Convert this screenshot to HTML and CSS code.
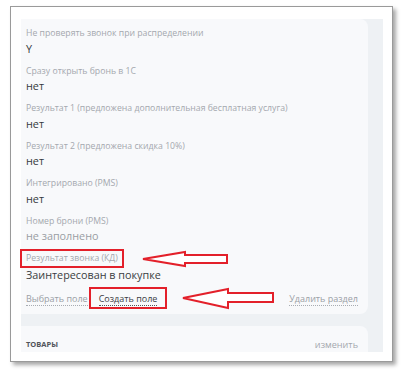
FILE: index.html
```html
<!DOCTYPE html>
<html lang="ru">
<head>
    <meta charset="UTF-8">
    <title>Поля сделки</title>
    <link rel="stylesheet" href="styles.css">
</head>
<body>

    <div class="shot">
        <div class="panel">
            <div class="card">
                <div class="field">
                    <div class="label">Не проверять звонок при распределении</div>
                    <div class="value">Y</div>
                </div>
                <div class="field">
                    <div class="label">Сразу открыть бронь в 1С</div>
                    <div class="value">нет</div>
                </div>
                <div class="field">
                    <div class="label">Результат 1 (предложена дополнительная бесплатная услуга)</div>
                    <div class="value">нет</div>
                </div>
                <div class="field">
                    <div class="label">Результат 2 (предложена скидка 10%)</div>
                    <div class="value">нет</div>
                </div>
                <div class="field">
                    <div class="label">Интегрировано (PMS)</div>
                    <div class="value">нет</div>
                </div>
                <div class="field">
                    <div class="label">Номер брони (PMS)</div>
                    <div class="value empty">не заполнено</div>
                </div>
                <div class="field">
                    <div class="label">Результат звонка (КД)</div>
                    <div class="value big">Заинтересован в покупке</div>
                </div>

                <div class="actions">
                    <a href="#">Выбрать поле</a>
                    <a href="#" class="dark">Создать поле</a>
                    <a href="#" class="right">Удалить раздел</a>
                </div>
            </div>

            <div class="card goods">
                <span class="goods-title">Товары</span>
                <a href="#" class="edit">изменить</a>
            </div>
        </div>
    </div>

    <!-- пометки поверх скриншота -->
    <svg class="marks" width="404" height="375" viewBox="0 0 404 375">
        <rect x="21" y="250" width="102" height="17" fill="none" stroke="#e3202a" stroke-width="2"/>
        <rect x="90" y="288" width="76" height="20" fill="none" stroke="#e3202a" stroke-width="2"/>
        <polygon points="143,259 185,252 185,255 227,255 227,263 185,263 185,266" fill="#fff" stroke="#e3202a" stroke-width="2" stroke-linejoin="miter"/>
        <polygon points="183,298 228,289 228,293 273,293 273,302 228,302 228,308" fill="#fff" stroke="#e3202a" stroke-width="2" stroke-linejoin="miter"/>
    </svg>

</body>
</html>
```

FILE: styles.css
```css
body {
    margin: 0;
    padding: 6px 0 0 10px;
    font-family: 'Open Sans', 'Liberation Sans', sans-serif;
    background-color: #fff;
    width: 404px;
    height: 375px;
    box-sizing: border-box;
    position: relative;
    overflow: hidden;
}

/* рамка скриншота */
.shot {
    width: 383px;
    box-sizing: border-box;
    border: 1px solid #9a9a9a;
    padding: 12px 9px 9px 10px;
    background-color: #fff;
    box-shadow: 3px 3px 4px rgba(0, 0, 0, 0.35);
}

.panel {
    background-color: #eef1f4;
    height: 333px;
    padding-right: 15px;
    overflow: hidden;
}

.card {
    background-color: #f8f9fb;
    border-radius: 0 8px 8px 0;
    padding: 8px 10px 8px 5px;
}

.field {
    margin-bottom: 8px;
}

.label {
    font-size: 8.7px;
    line-height: 13.5px;
    color: #a4a8ae;
}

.value {
    font-size: 10.8px;
    line-height: 16px;
    color: #36393e;
}

.value.empty {
    color: #9a9ea4;
}

.value.big {
    font-size: 10.8px;
    line-height: 18px;
    color: #3a3d42;
}

.field:last-of-type {
    margin-bottom: 0;
}

.actions {
    display: flex;
    gap: 11px;
    margin-top: 7px;
    line-height: 16px;
}

.actions a {
    font-size: 9px;
    color: #9ba0a6;
    text-decoration: none;
    border-bottom: 1px dotted #a8acb2;
    line-height: 13px;
}

.actions a.dark {
    color: #3c4046;
    border-bottom-color: #555;
}

.actions a.right {
    margin-left: auto;
}

.goods {
    margin-top: 12px;
    border-radius: 0 8px 0 0;
    display: flex;
    justify-content: space-between;
    align-items: center;
    padding-top: 12px;
}

.goods-title {
    font-size: 7.5px;
    font-weight: bold;
    text-transform: uppercase;
    color: #50545a;
}

.goods .edit {
    font-size: 9.1px;
    color: #a4a8ae;
    text-decoration: none;
}

.marks {
    position: absolute;
    left: 0;
    top: 0;
}
```
